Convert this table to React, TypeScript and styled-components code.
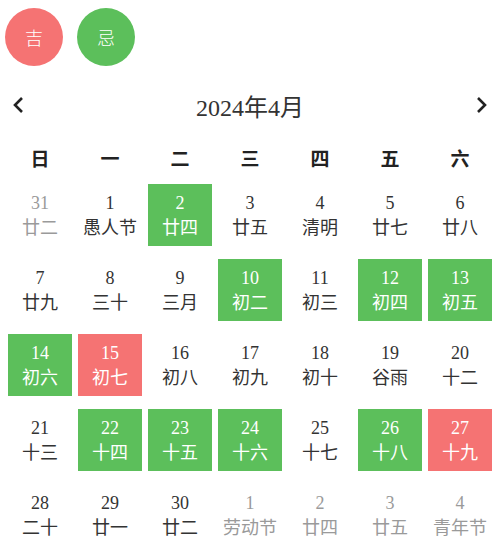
import React from "react";
import styled, { createGlobalStyle } from "styled-components";

const Global = createGlobalStyle`
  body { margin: 0; background: #fff; font-family: "Liberation Serif", "Noto Sans CJK SC", serif; color: #333; }
`;

const GREEN = "#5cbf5b";
const RED = "#f57373";

const Page = styled.div`
  width: 500px;
  padding: 8px 5px 0;
  box-sizing: border-box;
`;

const Badges = styled.div`
  display: flex;
  gap: 14px;
`;

const Badge = styled.div<{ $color: string }>`
  width: 58px;
  height: 58px;
  border-radius: 50%;
  background: ${(p) => p.$color};
  color: #fff;
  display: flex;
  align-items: center;
  justify-content: center;
  font-family: "Noto Sans CJK SC", sans-serif;
  font-weight: 300;
  font-size: 18px;
`;

const Header = styled.div`
  display: flex;
  align-items: center;
  justify-content: space-between;
  margin-top: 27px;
  padding: 0 7px;
  height: 24px;
`;

const Title = styled.div`
  font-size: 24px;
  color: #333;
`;

const NavBtn = styled.button`
  border: none;
  background: none;
  padding: 0;
  width: 12px;
  height: 22px;
  display: flex;
  cursor: pointer;
`;

const Grid = styled.div`
  display: grid;
  grid-template-columns: repeat(7, 70px);
  row-gap: 13px;
  margin-top: 32px;
`;

const WeekLabel = styled.div`
  text-align: center;
  font-weight: bold;
  font-size: 19px;
  color: #222;
  height: 22px;
  line-height: 22px;
`;

const Cell = styled.div<{ $bg?: string; $muted?: boolean }>`
  margin: 0 3px;
  height: 62px;
  background: ${(p) => p.$bg || "transparent"};
  color: ${(p) => (p.$bg ? "#fff" : p.$muted ? "#9a9a9a" : "#333")};
  display: flex;
  flex-direction: column;
  align-items: center;
  justify-content: center;
  font-size: 18px;
  line-height: 23px;
`;

const Num = styled.div``;
const Lunar = styled.div`
  font-family: "Noto Sans CJK SC", sans-serif;
  font-size: 18px;
`;

type Day = { d: number; l: string; m?: boolean; c?: "g" | "r" };

const days: Day[] = [
  { d: 31, l: "廿二", m: true }, { d: 1, l: "愚人节" }, { d: 2, l: "廿四", c: "g" }, { d: 3, l: "廿五" }, { d: 4, l: "清明" }, { d: 5, l: "廿七" }, { d: 6, l: "廿八" },
  { d: 7, l: "廿九" }, { d: 8, l: "三十" }, { d: 9, l: "三月" }, { d: 10, l: "初二", c: "g" }, { d: 11, l: "初三" }, { d: 12, l: "初四", c: "g" }, { d: 13, l: "初五", c: "g" },
  { d: 14, l: "初六", c: "g" }, { d: 15, l: "初七", c: "r" }, { d: 16, l: "初八" }, { d: 17, l: "初九" }, { d: 18, l: "初十" }, { d: 19, l: "谷雨" }, { d: 20, l: "十二" },
  { d: 21, l: "十三" }, { d: 22, l: "十四", c: "g" }, { d: 23, l: "十五", c: "g" }, { d: 24, l: "十六", c: "g" }, { d: 25, l: "十七" }, { d: 26, l: "十八", c: "g" }, { d: 27, l: "十九", c: "r" },
  { d: 28, l: "二十" }, { d: 29, l: "廿一" }, { d: 30, l: "廿二" }, { d: 1, l: "劳动节", m: true }, { d: 2, l: "廿四", m: true }, { d: 3, l: "廿五", m: true }, { d: 4, l: "青年节", m: true },
];

const weeks = ["日", "一", "二", "三", "四", "五", "六"];

const Chevron = ({ dir }: { dir: "l" | "r" }) => (
  <svg width="12" height="22" viewBox="0 0 12 22">
    <polyline
      points={dir === "l" ? "10,4 3,11 10,18" : "2,4 9,11 2,18"}
      fill="none"
      stroke="#222"
      strokeWidth="2.6"
    />
  </svg>
);

export default function App() {
  return (
    <Page>
      <Global />
      <Badges>
        <Badge $color={RED}>吉</Badge>
        <Badge $color={GREEN}>忌</Badge>
      </Badges>
      <Header>
        <NavBtn><Chevron dir="l" /></NavBtn>
        <Title>2024年4月</Title>
        <NavBtn><Chevron dir="r" /></NavBtn>
      </Header>
      <Grid>
        {weeks.map((w) => (
          <WeekLabel key={w}>{w}</WeekLabel>
        ))}
        {days.map((x, i) => (
          <Cell key={i} $muted={x.m} $bg={x.c === "g" ? GREEN : x.c === "r" ? RED : undefined}>
            <Num>{x.d}</Num>
            <Lunar>{x.l}</Lunar>
          </Cell>
        ))}
      </Grid>
    </Page>
  );
}
